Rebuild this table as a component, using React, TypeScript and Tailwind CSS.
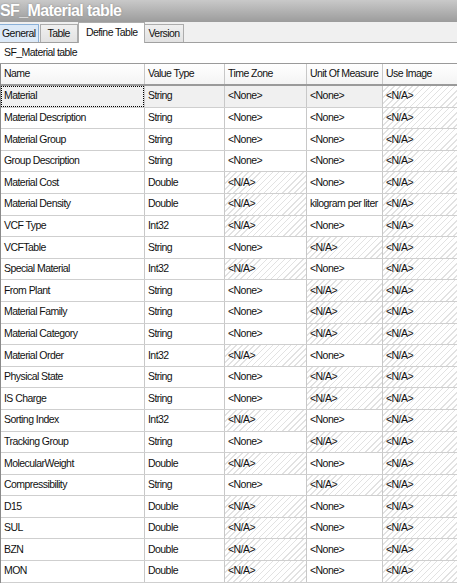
import React from "react";

type Row = {
  name: string;
  type: string;
  tz: string;
  uom: string;
};

const rows: Row[] = [
  { name: "Material", type: "String", tz: "<None>", uom: "<None>" },
  { name: "Material Description", type: "String", tz: "<None>", uom: "<None>" },
  { name: "Material Group", type: "String", tz: "<None>", uom: "<None>" },
  { name: "Group Description", type: "String", tz: "<None>", uom: "<None>" },
  { name: "Material Cost", type: "Double", tz: "<N/A>", uom: "<None>" },
  { name: "Material Density", type: "Double", tz: "<N/A>", uom: "kilogram per liter" },
  { name: "VCF Type", type: "Int32", tz: "<N/A>", uom: "<None>" },
  { name: "VCFTable", type: "String", tz: "<None>", uom: "<N/A>" },
  { name: "Special Material", type: "Int32", tz: "<N/A>", uom: "<None>" },
  { name: "From Plant", type: "String", tz: "<None>", uom: "<N/A>" },
  { name: "Material Family", type: "String", tz: "<None>", uom: "<N/A>" },
  { name: "Material Category", type: "String", tz: "<None>", uom: "<N/A>" },
  { name: "Material Order", type: "Int32", tz: "<N/A>", uom: "<None>" },
  { name: "Physical State", type: "String", tz: "<None>", uom: "<N/A>" },
  { name: "IS Charge", type: "String", tz: "<None>", uom: "<N/A>" },
  { name: "Sorting Index", type: "Int32", tz: "<N/A>", uom: "<None>" },
  { name: "Tracking Group", type: "String", tz: "<None>", uom: "<N/A>" },
  { name: "MolecularWeight", type: "Double", tz: "<N/A>", uom: "<None>" },
  { name: "Compressibility", type: "String", tz: "<None>", uom: "<N/A>" },
  { name: "D15", type: "Double", tz: "<N/A>", uom: "<None>" },
  { name: "SUL", type: "Double", tz: "<N/A>", uom: "<None>" },
  { name: "BZN", type: "Double", tz: "<N/A>", uom: "<None>" },
  { name: "MON", type: "Double", tz: "<N/A>", uom: "<None>" },
];

const hatch =
  "bg-[repeating-linear-gradient(135deg,#ffffff_0px,#ffffff_3.2px,#e2e2e2_3.2px,#e2e2e2_4.3px)]";

function Cell({ value, selected, first }: { value: string; selected: boolean; first?: boolean }) {
  const na = value === "<N/A>";
  return (
    <div
      className={`flex items-center pl-[3px] whitespace-nowrap overflow-hidden ${
        first ? "" : "border-l border-[#c8c8c8]"
      } ${na ? hatch : selected ? "bg-[#f0f0f0]" : "bg-white"}`}
    >
      {value}
    </div>
  );
}

export default function App() {
  return (
    <div
      className="w-[457px] h-[583px] overflow-hidden bg-white text-[10.5px] tracking-[-0.55px] text-[#111]"
      style={{ fontFamily: '"Liberation Sans", Arial, sans-serif' }}
    >
      {/* Title bar */}
      <div className="h-[22px] bg-gradient-to-b from-[#c9c9c9] to-[#9c9c9c] flex items-center">
        <span className="text-white font-bold text-[16px] tracking-[-0.6px] [text-shadow:0_0_2px_#888]">
          SF_Material table
        </span>
      </div>

      {/* Tabs */}
      <div className="h-[21px] bg-[#f0f0f0] flex items-end border-b border-[#a0a0a0] relative">
        <div className="h-[18px] px-[2px] flex items-center border border-b-0 border-[#8ab0d8] bg-[#dce9f7] -ml-[1px]">
          General
        </div>
        <div className="h-[18px] px-[7px] ml-[1px] flex items-center border border-b-0 border-[#acacac] bg-gradient-to-b from-[#f0f0f0] to-[#e2e2e2]">
          Table
        </div>
        <div className="h-[21px] px-[7px] flex items-center border border-b-0 border-[#acacac] bg-white -mb-px relative z-10">
          Define Table
        </div>
        <div className="h-[18px] px-[3px] flex items-center border border-b-0 border-l-0 border-[#acacac] bg-gradient-to-b from-[#f0f0f0] to-[#e2e2e2]">
          Version
        </div>
      </div>

      {/* Label */}
      <div className="h-[21px] pl-[4px] flex items-center border-b border-[#9a9a9a]">SF_Material table</div>

      {/* Table */}
      <div className="border-l border-[#8a8a8a]">
        <div className="grid grid-cols-[143px_80px_82px_76px_1fr] h-[22px] bg-gradient-to-b from-[#ffffff] to-[#f4f4f4] border-b-[2px] border-[#9a9a9a]">
          {["Name", "Value Type", "Time Zone", "Unit Of Measure", "Use Image"].map((h, i) => (
            <div
              key={h}
              className={`flex items-center pl-[3px] whitespace-nowrap overflow-hidden ${
                i > 0 ? "border-l border-[#c8c8c8]" : ""
              }`}
            >
              {h}
            </div>
          ))}
        </div>
        {rows.map((r, i) => {
          const sel = i === 0;
          return (
            <div
              key={r.name}
              className="grid grid-cols-[143px_80px_82px_76px_1fr] h-[21.6px] border-b border-[#cfcfcf]"
            >
              <div
                className={`flex items-center pl-[3px] whitespace-nowrap ${
                  sel ? "bg-[#f0f0f0] outline outline-1 outline-dotted outline-black -outline-offset-1" : ""
                }`}
              >
                {r.name}
              </div>
              <Cell value={r.type} selected={sel} />
              <Cell value={r.tz} selected={sel} />
              <Cell value={r.uom} selected={sel} />
              <Cell value="<N/A>" selected={sel} />
            </div>
          );
        })}
      </div>
    </div>
  );
}
